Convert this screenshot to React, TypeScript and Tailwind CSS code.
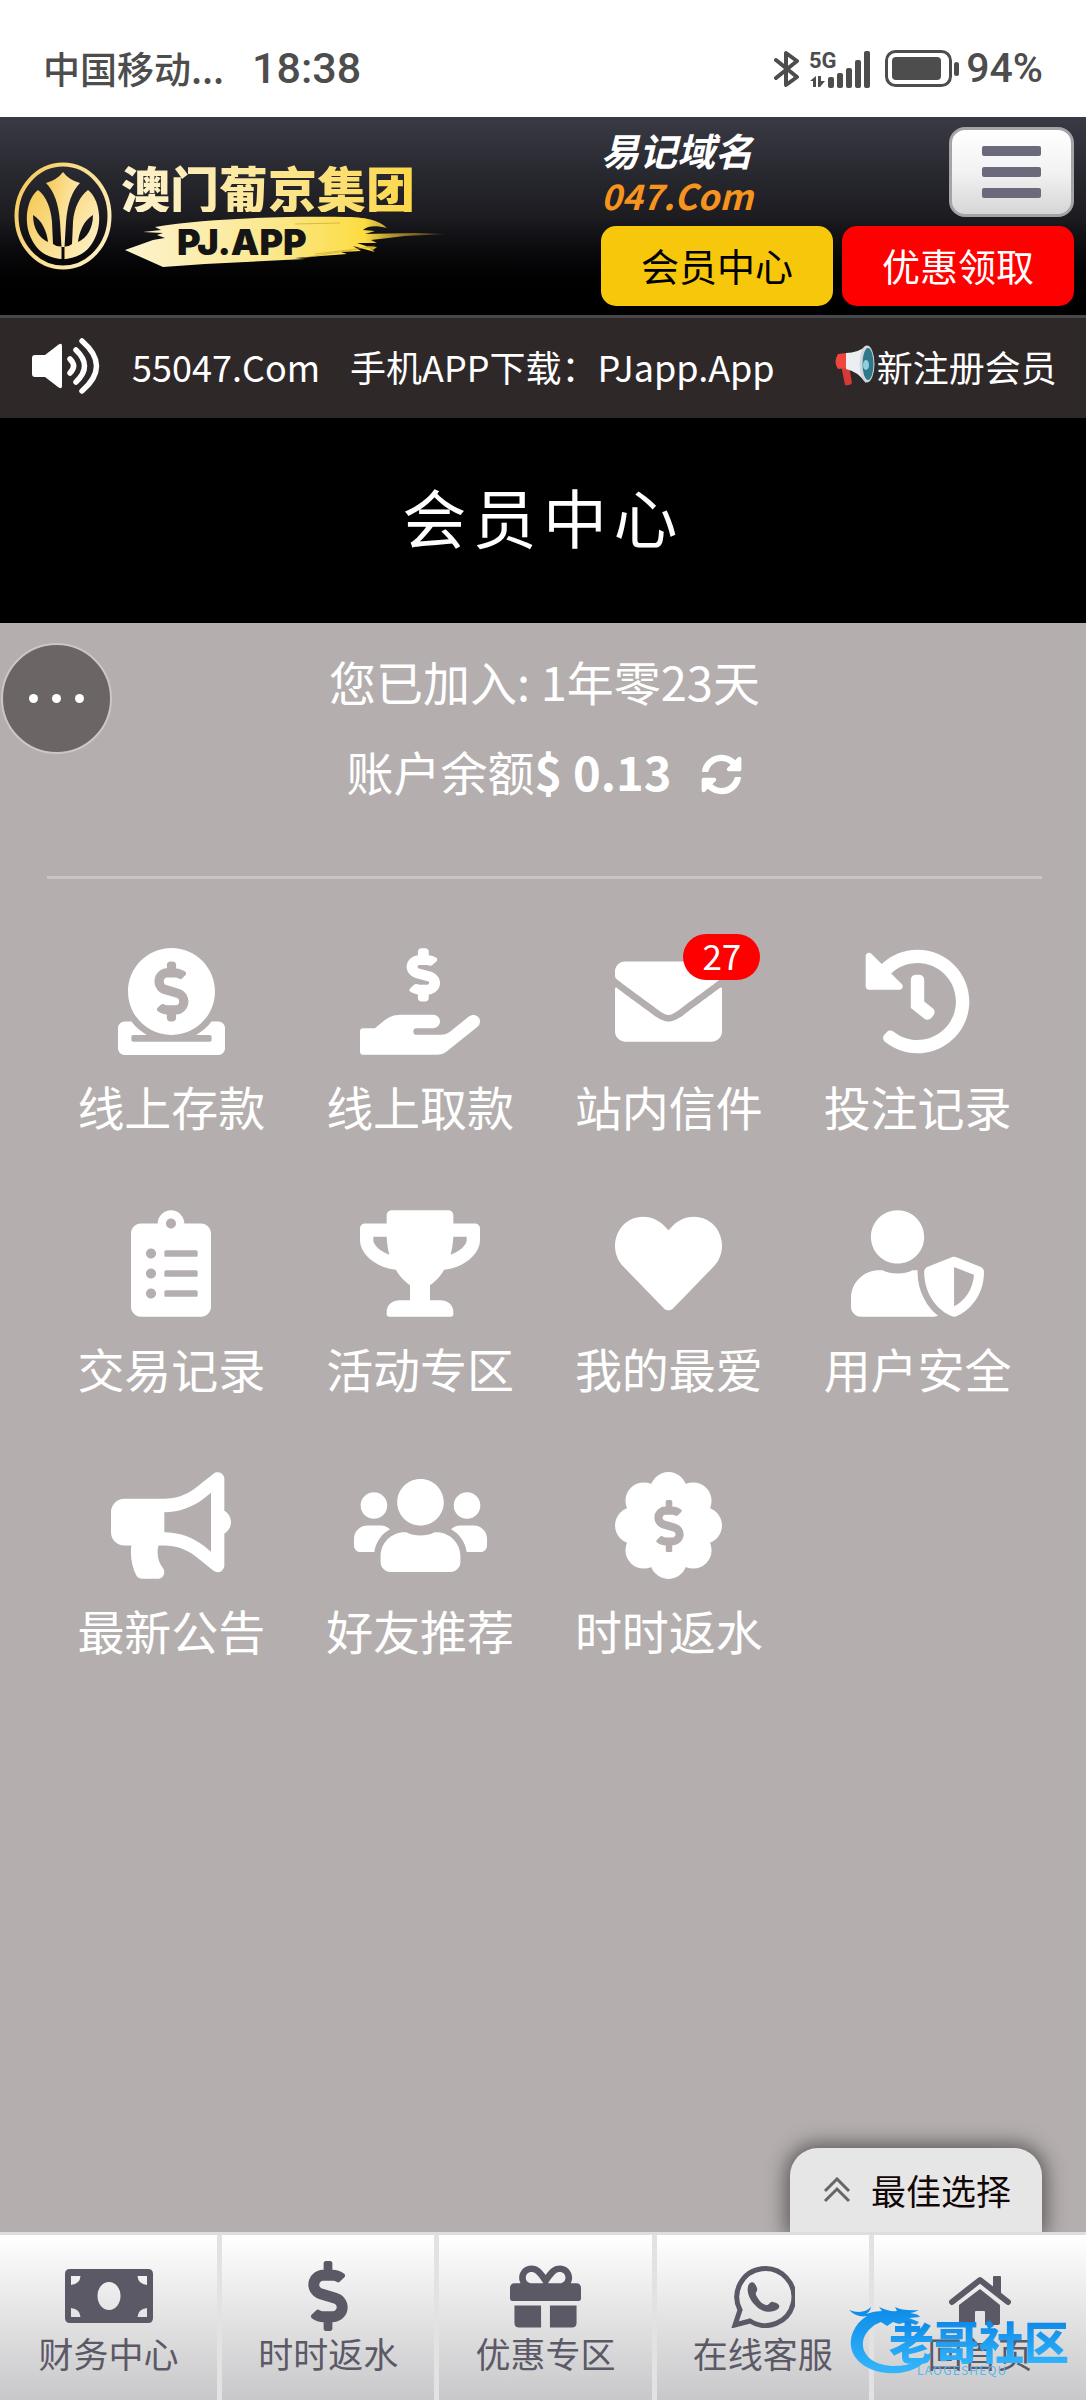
import React from "react";
import {
  FaBullhorn,
  FaClipboardList,
  FaDollarSign,
  FaDonate,
  FaEnvelope,
  FaGift,
  FaHandHoldingUsd,
  FaHeart,
  FaHistory,
  FaSyncAlt,
  FaTrophy,
  FaUserShield,
  FaUsers,
} from "react-icons/fa";

function Bluetooth() {
  return (
    <svg className="h-[38px] w-[26px]" viewBox="0 0 26 38" fill="none" stroke="#4d4d4d" strokeWidth="4" strokeLinejoin="round" strokeLinecap="round" aria-label="蓝牙">
      <path d="M2 10 L23 27 L12 35 V3 L23 11 L2 28" />
    </svg>
  );
}

function Signal() {
  return (
    <svg className="h-[38px] w-[60px] overflow-visible" viewBox="0 0 60 38" fill="#4d4d4d" aria-label="5G 信号">
      <text x="-1" y="18" fontFamily="Roboto, sans-serif" fontWeight="700" fontSize="22">5G</text>
      <path d="M6 26v11h-3v-6H0zM8 26h3v5h4l-5 6H8z" />
      <rect x="18" y="27" width="6" height="11" rx="2" />
      <rect x="27" y="23" width="6" height="15" rx="2" />
      <rect x="36" y="18" width="6" height="20" rx="2" />
      <rect x="45" y="10" width="6" height="28" rx="2" />
      <rect x="54" y="1" width="6" height="37" rx="2" />
    </svg>
  );
}

function Battery() {
  return (
    <svg className="h-[38px] w-[75px]" viewBox="0 0 75 38" fill="#4d4d4d" aria-label="电池">
      <rect x="1.5" y="1.5" width="64" height="34" rx="9" fill="none" stroke="#4d4d4d" strokeWidth="3" />
      <rect x="7" y="7" width="49" height="23" rx="4" />
      <rect x="69" y="12" width="5" height="14" rx="2.5" />
    </svg>
  );
}

function Emblem() {
  return (
    <svg className="h-[108px] w-[98px] shrink-0" viewBox="0 0 98 108">
      <defs>
        <linearGradient id="gold" x1="0" x2="1" y1="0.2" y2="0.8">
          <stop offset="0" stopColor="#f6cb5c" />
          <stop offset="0.5" stopColor="#fbdf92" />
          <stop offset="1" stopColor="#fdf0c4" />
        </linearGradient>
      </defs>
      <ellipse cx="49" cy="54" rx="46.5" ry="51.5" fill="none" stroke="url(#gold)" strokeWidth="4" />
      <path
        fill="url(#gold)"
        fillRule="evenodd"
        d="M24 28C13 36 9 60 17 76C24 92 38 97 49 97S74 92 81 76C89 60 85 36 74 28C66 34 60 46 59 60L58 82Q54 85 50.500 84.500V97H47.500V84.500Q43 85 39 82L38 60C37 46 32 34 24 28ZM19 53C28 58 33 70 34 80C25 76 19 66 19 53ZM79 53C70 58 65 70 64 80C73 76 79 66 79 53Z"
      />
      <path fill="url(#gold)" d="M49 10Q55 18 66 21Q54 33 52 60L50.500 85H47.500L46 60Q44 33 32 21Q43 18 49 10Z" />
    </svg>
  );
}

function Brush() {
  return (
    <svg className="col-start-1 row-start-1 h-[52px] w-[320px]" viewBox="0 0 320 52">
      <defs>
        <linearGradient id="brush" x1="0" x2="1" y1="0" y2="0">
          <stop offset="0" stopColor="#fdf3cf" />
          <stop offset="0.45" stopColor="#fbe88f" />
          <stop offset="0.75" stopColor="#fcdc41" />
          <stop offset="1" stopColor="#b08a20" stopOpacity="0.300" />
        </linearGradient>
      </defs>
      <path
        fill="url(#brush)"
        d="M0 34L28 24L40 22L32 19L38 17L18 16L36 14L30 11C80 3 150 0 222 1C244 1 256 6 262 12C250 9 242 10 238 14L250 15L240 18L290 17L320 18L280 20L246 24L252 27L232 27L244 31L250 36L228 30L236 35L216 36L222 38L170 42L180 43L80 48L38 51Z"
      />
      <path fill="#d6b32b" d="M242 30l10 1-4 3z" />
      <path stroke="#b89122" strokeWidth="1" opacity="0.5" d="M178 42L250 30M170 8L215 7M190 38L232 33" />
    </svg>
  );
}

function Speaker() {
  return (
    <svg className="h-[56px] w-[68px] shrink-0" viewBox="0 0 68 56" fill="none" stroke="#fff" strokeWidth="5.500" strokeLinecap="round" aria-label="公告">
      <path fill="#fff" stroke="none" d="M3 17h10L26 7q4-3 4 1v40q0 4-4 1L13 39H3q-3 0-3-3V20q0-3 3-3z" />
      <path d="M38 21Q45 28 38 35M44 12Q61 28 44 44M50 3Q79 28 50 53" />
    </svg>
  );
}

function Loudspeaker() {
  return (
    <svg className="h-[42px] w-[40px] shrink-0" viewBox="0 0 40 42">
      <path fill="#d63a34" d="M6 20h8l3 18q-2 3-7 2z" />
      <path fill="#f0463e" d="M3 9l9-1v15l-9 1q-5-7 0-15z" />
      <path fill="#eceff1" d="M11 8Q23 8 31 1v37Q22 26 11 24z" />
      <ellipse cx="32" cy="19" rx="7.500" ry="18.500" fill="#cfd8dc" />
      <ellipse cx="33" cy="19" rx="5.500" ry="16" fill="#2f7889" />
      <ellipse cx="31" cy="20" rx="3" ry="5" fill="#8fd0e0" />
    </svg>
  );
}

function BadgeDollar() {
  return (
    <span className="flex size-[107px] items-center justify-center">
      <svg className="size-[107px] shrink-0" viewBox="0 0 512 512" fill="currentColor">
        <circle cx="256" cy="256" r="190" />
        <circle cx="256" cy="88" r="88" />
        <circle cx="256" cy="424" r="88" />
        <circle cx="88" cy="256" r="88" />
        <circle cx="424" cy="256" r="88" />
        <circle cx="138" cy="138" r="88" />
        <circle cx="374" cy="138" r="88" />
        <circle cx="138" cy="374" r="88" />
        <circle cx="374" cy="374" r="88" />
      </svg>
      <FaDollarSign className="absolute h-[52px] w-[30px] text-[#b4afae]" />
    </span>
  );
}

function Bill() {
  return (
    <svg className="h-[54px] w-[88px]" viewBox="0 0 88 54" fill="currentColor">
      <path
        fillRule="evenodd"
        d="M5 0H83Q88 0 88 5V49Q88 54 83 54H5Q0 54 0 49V5Q0 0 5 0ZM6 7V16Q15 15 15.500 7ZM82 7V16Q73 15 72.500 7ZM6 48V39Q15 40 15.500 48ZM82 48V39Q73 40 72.500 48ZM44 13A11.500 14 0 0 0 44 41A11.500 14 0 0 0 44 13Z"
      />
    </svg>
  );
}

function ChatPhone() {
  return (
    <svg className="size-[64px]" viewBox="0 0 64 64" fill="currentColor">
      <path fill="none" stroke="currentColor" strokeWidth="5" strokeLinejoin="miter" d="M9 46A28.500 28.500 0 1 1 19 57L4 61Z" />
      <path d="M18 20C21 17 24 18 26 24C27 28 24 28 25 31C28 37 31 40 35 41C38 42 39 37 42 38C48 39 50 42 47 45C40 50 30 48 24 41C17 34 15 25 18 20Z" />
    </svg>
  );
}

function House() {
  return (
    <svg className="mt-[10px] h-[50px] w-[62px]" viewBox="0 0 62 50" fill="currentColor">
      <path fill="none" stroke="currentColor" strokeWidth="6" strokeLinejoin="round" strokeLinecap="round" d="M3 26L31 4L59 26" />
      <path d="M44 1q0-1 1-1h6q1 0 1 1v20l-8-7z" />
      <path d="M31 13L51 29V47Q51 49 49 49H36V36q0-1-1-1h-8q-1 0-1 1V49H12Q10 49 10 47V29Z" />
    </svg>
  );
}

function DragonRing() {
  return (
    <svg className="h-[70px] w-[86px]" viewBox="0 0 86 70">
      <defs>
        <linearGradient id="sea" x1="0" x2="0" y1="0" y2="1">
          <stop offset="0" stopColor="#0c8be8" />
          <stop offset="1" stopColor="#35b6fb" />
        </linearGradient>
      </defs>
      <path
        fill="url(#sea)"
        d="M0 4Q14 9 22 1Q21 6 17 8Q25 5 33 5L30 1Q40 6 48 5L46 1Q54 5 70 4Q64 7 61 7Q70 8 71 11L60 12L70 16L67 19L58 16L50 18L44 16L38 20L32 16Q26 18 22 22C6 36 14 58 42 60C60 61 74 54 82 46C78 60 58 69 38 67C10 64 -4 46 4 26Q8 16 18 10Q8 12 0 4Z"
      />
    </svg>
  );
}

const features = [
  { label: "线上存款", icon: <FaDonate className="size-[107px]" /> },
  { label: "线上取款", icon: <FaHandHoldingUsd className="h-[107px] w-[120px]" /> },
  { label: "站内信件", icon: <FaEnvelope className="size-[107px]" />, badge: 27 },
  { label: "投注记录", icon: <FaHistory className="size-[107px]" /> },
  { label: "交易记录", icon: <FaClipboardList className="h-[107px] w-[80px]" /> },
  { label: "活动专区", icon: <FaTrophy className="h-[107px] w-[120px]" /> },
  { label: "我的最爱", icon: <FaHeart className="size-[107px]" /> },
  { label: "用户安全", icon: <FaUserShield className="h-[107px] w-[133px]" /> },
  { label: "最新公告", icon: <FaBullhorn className="h-[107px] w-[120px]" /> },
  { label: "好友推荐", icon: <FaUsers className="h-[107px] w-[133px]" /> },
  { label: "时时返水", icon: <BadgeDollar /> },
];

const tabs = [
  { label: "财务中心", icon: <Bill /> },
  { label: "时时返水", icon: <FaDollarSign className="h-[70px] w-[40px]" /> },
  { label: "优惠专区", icon: <FaGift className="size-[71px]" /> },
  { label: "在线客服", icon: <ChatPhone /> },
  { label: "回首页", icon: <House /> },
];

export default function App() {
  return (
    <div className="relative flex min-h-screen flex-col bg-[#b4afae] font-['Noto_Sans_CJK_SC',sans-serif] text-white">
      <div className="flex h-[117px] items-center justify-between bg-white px-[43px] pt-[20px] font-medium text-[#4d4d4d]">
        <div className="flex items-center gap-[28px]">
          <span className="text-[37px]">中国移动...</span>
          <span className="font-[Roboto,sans-serif] text-[43px]">18:38</span>
        </div>
        <div className="flex items-center">
          <Bluetooth />
          <div className="ml-[10px] flex"><Signal /></div>
          <div className="ml-[15px] flex"><Battery /></div>
          <span className="ml-[6px] font-[Roboto,sans-serif] text-[41px]">94%</span>
        </div>
      </div>

      <header className="flex h-[201px] justify-between border-b-[3px] border-[#47474b] bg-linear-to-b from-[#393a44] via-[#1c1c21] to-black pr-[12px] pl-[14px]">
        <a href="#home" className="flex items-start gap-[9px] pt-[45px]">
          <Emblem />
          <div>
            <div className="bg-linear-to-r from-[#fdf3cf] to-[#fbd52c] bg-clip-text text-[49px] leading-[50px] font-black text-transparent">澳门葡京集团</div>
            <div className="grid w-[320px] items-center pt-[4px] pl-1">
              <Brush />
              <span className="col-start-1 row-start-1 pl-[52px] font-[Inter,sans-serif] text-[36px] leading-[52px] font-black text-[#151515]">PJ.APP</span>
            </div>
          </div>
        </a>
        <div className="w-[473px] pt-[10px]">
          <div className="flex h-[90px] justify-between">
            <div className="text-[38px] leading-[45px] font-bold italic">
              <div>易记域名</div>
              <div className="text-[35px] text-[#f7941d]">047.Com</div>
            </div>
            <button aria-label="菜单" className="flex w-[125px] flex-col items-center justify-center gap-[11px] rounded-[16px] border-[3px] border-[#a3a3a8] bg-linear-to-b from-white via-[#f2f2f2] to-[#d6d6d6]">
              <span className="h-[10px] w-[59px] rounded-xs bg-[#6a6a7c]" />
              <span className="h-[10px] w-[59px] rounded-xs bg-[#6a6a7c]" />
              <span className="h-[10px] w-[59px] rounded-xs bg-[#6a6a7c]" />
            </button>
          </div>
          <div className="mt-[9px] grid grid-cols-2 gap-[9px] text-[38px]">
            <button className="h-[80px] rounded-[15px] bg-[#f6c70a] pb-1 text-black">会员中心</button>
            <button className="h-[80px] rounded-[15px] bg-[#ff0000] pb-1 text-white">优惠领取</button>
          </div>
        </div>
      </header>

      <div className="flex h-[100px] items-center overflow-hidden bg-[#2f2829] pb-1 pl-[32px] text-[36px] whitespace-nowrap">
        <Speaker />
        <span className="ml-[32px]">55047.Com</span>
        <span className="ml-[30px]">手机APP下载：PJapp.App</span>
        <span className="ml-[60px] flex items-center gap-[2px]">
          <Loudspeaker />
          新注册会员
        </span>
      </div>

      <div className="flex h-[205px] items-center justify-center bg-black pb-3">
        <h1 className="text-[64px] tracking-widest">会员中心</h1>
      </div>

      <button aria-label="更多" className="absolute top-[643px] left-[1px] flex size-[111px] items-center justify-center gap-[14px] rounded-full border-2 border-[#cbc7c6] bg-[#6b6665]">
        <span className="size-[9px] rounded-full bg-white" />
        <span className="size-[9px] rounded-full bg-white" />
        <span className="size-[9px] rounded-full bg-white" />
      </button>

      <main className="flex-1 pt-[13px] pr-[44px] pl-[47px]">
        <div className="text-center text-[47px] leading-[90px]">
          <p>您已加入: 1年零23天</p>
          <p className="flex items-center justify-center">
            账户余额<b className="font-bold">$ 0.13</b>
            <button aria-label="刷新余额" className="ml-[30px]"><FaSyncAlt className="mt-[6px] size-[41px]" /></button>
          </p>
        </div>
        <hr className="mt-[60px] border-t-[3px] border-[#c9c5c4]" />
        <nav className="grid auto-rows-[262px] grid-cols-4 pt-[69px]">
          {features.map((f) => (
            <a key={f.label} href="#feature" className="flex flex-col items-center">
              <span className="relative">
                {f.icon}
                {f.badge && (
                  <span className="absolute -top-[14px] left-[68px] flex h-[46px] w-[77px] items-center justify-center rounded-full bg-[#ff0000] pb-[3px] text-[35px]">{f.badge}</span>
                )}
              </span>
              <span className="mt-[18px] text-[47px] leading-[66px]">{f.label}</span>
            </a>
          ))}
        </nav>
      </main>

      <div className="flex justify-end pr-[44px]">
        <button className="flex h-[84px] w-[252px] items-center justify-center gap-[20px] rounded-t-[28px] bg-[#e6e6e6] pl-[2px] text-[35px] text-[#120606] shadow-[0_0_20px_4px_rgba(0,0,0,0.5)]">
          <svg className="h-[26px] w-[28px]" viewBox="0 0 28 26" fill="none" stroke="#666" strokeWidth="3">
            <path d="M2 14L14 2L26 14M2 24L14 12L26 24" />
          </svg>
          最佳选择
        </button>
      </div>

      <footer className="relative">
        <nav className="grid h-[168px] grid-cols-5 border-t-[3px] border-[#dedede] bg-linear-to-b from-white to-[#c8c8ca] text-[#5c5967]">
          {tabs.map((t) => (
            <a key={t.label} href="#tab" className="flex flex-col items-center border-l-[5px] border-[#e2e2e3] pt-[25px] first:border-l-0">
              <span className="flex h-[72px] items-center">{t.icon}</span>
              <span className="text-[35px] leading-[42px]">{t.label}</span>
            </a>
          ))}
        </nav>
        <div className="pointer-events-none absolute right-[17px] bottom-[24px] flex items-end">
          <DragonRing />
          <div className="-ml-[46px] flex flex-col">
            <span className="bg-linear-to-b from-[#0d86e6] to-[#2fb4fb] bg-clip-text text-[45px] leading-[46px] font-black text-transparent">老哥社区</span>
            <span className="pl-[28px] text-[12px] leading-[12px] tracking-widest text-[#5cb6ee]">LAOGESHEQU</span>
          </div>
        </div>
      </footer>
    </div>
  );
}
